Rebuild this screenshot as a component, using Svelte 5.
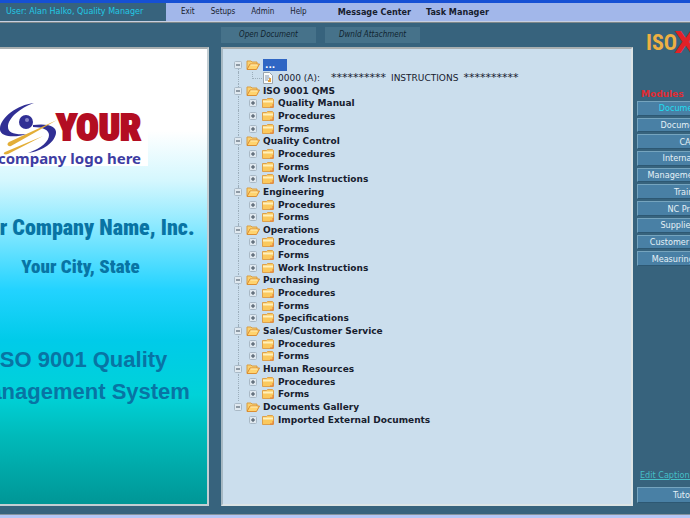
<script>
  const menus = ['Exit', 'Setups', 'Admin', 'Help'];
  const centers = ['Message Center', 'Task Manager'];
  const groups = [
    ['ISO 9001 QMS', ['Quality Manual', 'Procedures', 'Forms']],
    ['Quality Control', ['Procedures', 'Forms', 'Work Instructions']],
    ['Engineering', ['Procedures', 'Forms']],
    ['Operations', ['Procedures', 'Forms', 'Work Instructions']],
    ['Purchasing', ['Procedures', 'Forms', 'Specifications']],
    ['Sales/Customer Service', ['Procedures', 'Forms']],
    ['Human Resources', ['Procedures', 'Forms']],
    ['Documents Gallery', ['Imported External Documents']]
  ];
  const rows = [
    { kind: 'root', label: '...', selected: true },
    { kind: 'doc', code: '0000 (A):', label: 'INSTRUCTIONS' },
    ...groups.flatMap(([label, items]) => [
      { kind: 'root', label },
      ...items.map((item) => ({ kind: 'child', label: item }))
    ])
  ];
  const lastRoot = rows.length - 2;
  const modules = [
    'Documentation', 'Document Ctrl', 'CAPA', 'Internal Audit', 'Management Review',
    'Training', 'NC Product', 'Supplier Mgmt', 'Customer Feedback', 'Measuring Devices'
  ];
  let active = $state(0);
</script>

{#snippet toggle(open)}
  <button class="toggle" aria-label={open ? 'Collapse' : 'Expand'}>
    <svg viewBox="0 0 8 8" width="8" height="8">
      <rect x=".5" y=".5" width="7" height="7" rx="1" fill="#dfe8ef" stroke="#a9b9c6" />
      <path d={open ? 'M2 4h4' : 'M2 4h4M4 2v4'} stroke="#3c4a58" />
    </svg>
  </button>
{/snippet}

<div class="app">
  <header>
    <div class="user">User: Alan Halko, Quality Manager</div>
    <nav class="menu">
      {#each menus as m}<button>{m}</button>{/each}
    </nav>
    <nav class="menu strong">
      {#each centers as m}<button>{m}</button>{/each}
    </nav>
  </header>

  <div class="body">
    <section class="cover">
      <div class="logo">
        <div class="mark">
          <svg viewBox="0 0 64 54" width="64" height="54" aria-hidden="true">
            <path d="M38 2C20 4 3 18 4 29c1 7 15 8 27 4-12 1-19-1-19-7C12 17 24 7 38 2Z" fill="#302f94" />
            <circle cx="30" cy="21" r="7" fill="#302f94" />
            <circle cx="31" cy="19" r="2" fill="#8583c8" />
            <path d="M37 24c14-2 24 1 23 8-1 9-13 18-28 20 14-5 21-12 21-18 0-5-6-8-16-8Z" fill="#302f94" />
            <path d="M61 19 13 41c-3 2-1 5 2 4Z" fill="#e3ae37" />
            <path d="M47 35 9 51c-3 2 0 3 3 2Z" fill="#e3ae37" />
          </svg>
          <strong>YOUR</strong>
        </div>
        <span>company logo here</span>
      </div>
      <h1>Your Company Name, Inc.</h1>
      <h2>Your City, State</h2>
      <p>ISO 9001 Quality<br />Management System</p>
    </section>

    <main>
      <div class="tools">
        <button>Open Document</button>
        <button>Dwnld Attachment</button>
      </div>
      <div class="panel">
        <ul class="tree">
          {#each rows as row, i}
            <li class={row.kind} class:line={i < lastRoot} class:first={i === 0}>
              {#if row.kind === 'doc'}
                <svg class="page" viewBox="0 0 10 12" width="10" height="12" aria-hidden="true">
                  <path d="M.5.5h6l3 3v8h-9Z" fill="#fbfcfa" stroke="#9aa5ad" />
                  <path d="M2 4h4M2 6h5M2 8h3" stroke="#8397b0" />
                  <path d="M5 9h3M6 7h2" stroke="#e5a03a" stroke-width="2" />
                </svg>
                <span class="code">{row.code}</span>
                <span class="stars">**********</span>
                <span class="title">{row.label}</span>
                <span class="stars">**********</span>
              {:else}
                {@render toggle(row.kind === 'root')}
                <svg class="folder" viewBox="0 0 14 12" width="14" height="12" aria-hidden="true">
                  {#if row.kind === 'root'}
                    <path d="M1 10V2h4l1 1h5v3" fill="#f9d070" stroke="#d99d42" />
                    <path d="M1 10.500 4 5h9.500l-3 5.500Z" fill="#ffd36e" stroke="#db8e32" />
                    <path d="M4.500 6h7" stroke="#fff0b8" />
                  {:else}
                    <path d="M1.500 10.500v-8h4l1-1h5l1 1v8Z" fill="#fbc95d" stroke="#dda04c" />
                    <path d="M2 4.500h10" stroke="#fff0bd" stroke-width="2" />
                    <path d="M9 10h3V7" fill="none" stroke="#e07a3c" />
                  {/if}
                </svg>
                <span class:selected={row.selected}>{row.label}</span>
              {/if}
            </li>
          {/each}
        </ul>
      </div>
    </main>

    <aside>
      <div class="brand"><span>ISO</span><b>X</b></div>
      <h3>Modules</h3>
      <div class="modules">
        {#each modules as m, i}
          <button class:active={active === i} onclick={() => (active = i)}>{m}</button>
        {/each}
      </div>
      <a href="#captions">Edit Caption List</a>
      <button class="tutorials">Tutorials</button>
    </aside>
  </div>
  <footer></footer>
</div>

<style>
  :global(body) { margin: 0; overflow: hidden; }
  .app {
    display: flex;
    flex-direction: column;
    height: 100vh;
    overflow: hidden;
    background: #37637d;
    font: 9px/12px "DejaVu Sans Condensed", "DejaVu Sans", sans-serif;
    color: #17202e;
  }
  button {
    margin: 0;
    padding: 0;
    border: 0;
    background: none;
    font: inherit;
    color: inherit;
    white-space: nowrap;
  }
  header {
    display: flex;
    align-items: stretch;
    height: 18px;
    border-top: 3px solid #1650d4;
    border-bottom: 1px solid #c7d0e2;
    box-shadow: 0 1px #7e8789;
    background: #a2b7ea;
  }
  .user {
    box-sizing: border-box;
    width: 166px;
    padding-left: 6px;
    line-height: 18px;
    background: #37637d;
    color: #22c9e4;
    font-family: "DejaVu Sans", sans-serif;
    font-size: 8px;
    white-space: nowrap;
  }
  .menu { display: flex; gap: 16px; padding-left: 15px; font-size: 8px; }
  .menu.strong { gap: 15px; padding-left: 31px; font-size: 9px; font-weight: bold; }
  .body {
    flex: 1;
    min-height: 0;
    display: grid;
    grid-template-columns: 209px minmax(0, 1fr) 53px;
    padding-bottom: 8px;
  }
  .cover {
    box-sizing: border-box;
    margin: 25px 0 0 -48px;
    padding-top: 56px;
    border: 2px solid #c3ced3;
    border-top-color: #a9afb0;
    background: linear-gradient(#fff 0, #fff 18%, #d4f7fe 29%, #8be9ff 39%, #22d3ff 53%, #00cbe9 64%, #00d2d8 76%, #00baba 85%, #009696 100%);
    text-align: center;
    color: #0874a4;
    white-space: nowrap;
  }
  .logo { width: 194px; height: 61px; background: #fff; text-align: right; }
  .mark { display: flex; justify-content: flex-end; align-items: center; height: 45px; padding-right: 7px; }
  .mark svg { flex: none; margin-right: -4px; }
  .mark strong {
    font: 900 37px/44px "Roboto Condensed", "DejaVu Sans Condensed", sans-serif;
    color: #b30d22;
    -webkit-text-stroke: 2px #b30d22;
  }
  .logo span {
    display: block;
    padding-right: 7px;
    font: bold 15px/16px "Noto Sans", sans-serif;
    color: #3d3da3;
  }
  h1, h2 {
    margin: 0;
    font-family: "Roboto Condensed", Roboto, sans-serif;
    font-weight: 900;
  }
  h1 { margin-top: 49px; font-size: 22px; line-height: 26px; }
  h2 { margin-top: 14px; font-size: 19px; line-height: 24px; }
  .cover p { margin: 65px 0 0; font: bold 22px/32px "Liberation Sans", sans-serif; }
  main { display: flex; flex-direction: column; min-width: 0; padding: 0 4px 0 12px; }
  .tools { display: flex; gap: 9px; padding: 5px 0 4px; }
  .tools button {
    width: 95px;
    height: 16px;
    background: #46728a;
    color: #10232f;
    font-size: 8px;
    font-style: italic;
  }
  .panel {
    flex: 1;
    box-sizing: border-box;
    border: 2px solid #dce4e5;
    border-top-color: #a9afb0;
    border-left-color: #a7b9c3;
    background: #cbdeed;
    overflow: hidden;
  }
  .tree {
    display: grid;
    grid-auto-rows: 1fr;
    height: 367px;
    margin: 10px 0 0;
    padding: 0 0 0 11px;
    list-style: none;
    font: bold 9px/12px "DejaVu Sans", sans-serif;
    white-space: nowrap;
  }
  li { display: flex; align-items: center; position: relative; min-height: 0; }
  li.line::before {
    content: "";
    position: absolute;
    left: 4px;
    top: 0;
    bottom: 0;
    border-left: 1px dotted #9caebb;
  }
  li.first::before { top: 6px; }
  .child { padding-left: 15px; }
  .toggle { position: relative; width: 8px; height: 8px; margin-right: 4px; flex: none; }
  .toggle svg { display: block; }
  .folder { flex: none; margin-right: 3px; }
  .page { flex: none; margin: 0 5px 0 29px; }
  .doc { font-weight: normal; }
  .doc::after {
    content: "";
    position: absolute;
    left: 18px;
    top: 0;
    width: 9px;
    height: 6px;
    border: 1px dotted #9caebb;
    border-width: 0 0 1px 1px;
  }
  .code { margin-right: 11px; }
  .stars { font-size: 11px; }
  .title { margin: 0 5px; }
  .selected { width: 24px; box-sizing: border-box; padding-left: 2px; background: #2f66c4; color: #fff; }
  aside { display: flex; flex-direction: column; align-items: flex-start; min-width: 0; white-space: nowrap; color: #e5f0f6; }
  .brand {
    display: flex;
    align-items: center;
    height: 24px;
    margin: 9px 0 0 9px;
    font: bold 22px/24px "Roboto Condensed", "DejaVu Sans Condensed", sans-serif;
    color: #eeb043;
  }
  .brand b { margin-left: -3px; font: bold 30px/24px "DejaVu Sans", sans-serif; color: #e12127; }
  h3 { margin: 33px 0 1px 4px; font: bold 9px/12px "DejaVu Sans", sans-serif; color: #e02b32; }
  .modules { display: grid; grid-auto-rows: 1fr; gap: 2px; height: 165px; }
  .modules, .tutorials { width: 106px; }
  .modules button, .tutorials {
    box-sizing: border-box;
    border: 1px solid #6d9fbd;
    border-color: #75a4be #2d5873 #2d5873 #75a4be;
    background: #4980a5;
    font-size: 9px;
    line-height: 12px;
  }
  .modules .active { color: #1fdcf0; }
  a { margin: auto 0 6px 3px; font-size: 9px; color: #45bfc7; }
  .tutorials { height: 16px; margin-bottom: 3px; }
  footer { height: 3px; border-top: 1px solid #84939d; background: #b5c7f6; }
</style>
